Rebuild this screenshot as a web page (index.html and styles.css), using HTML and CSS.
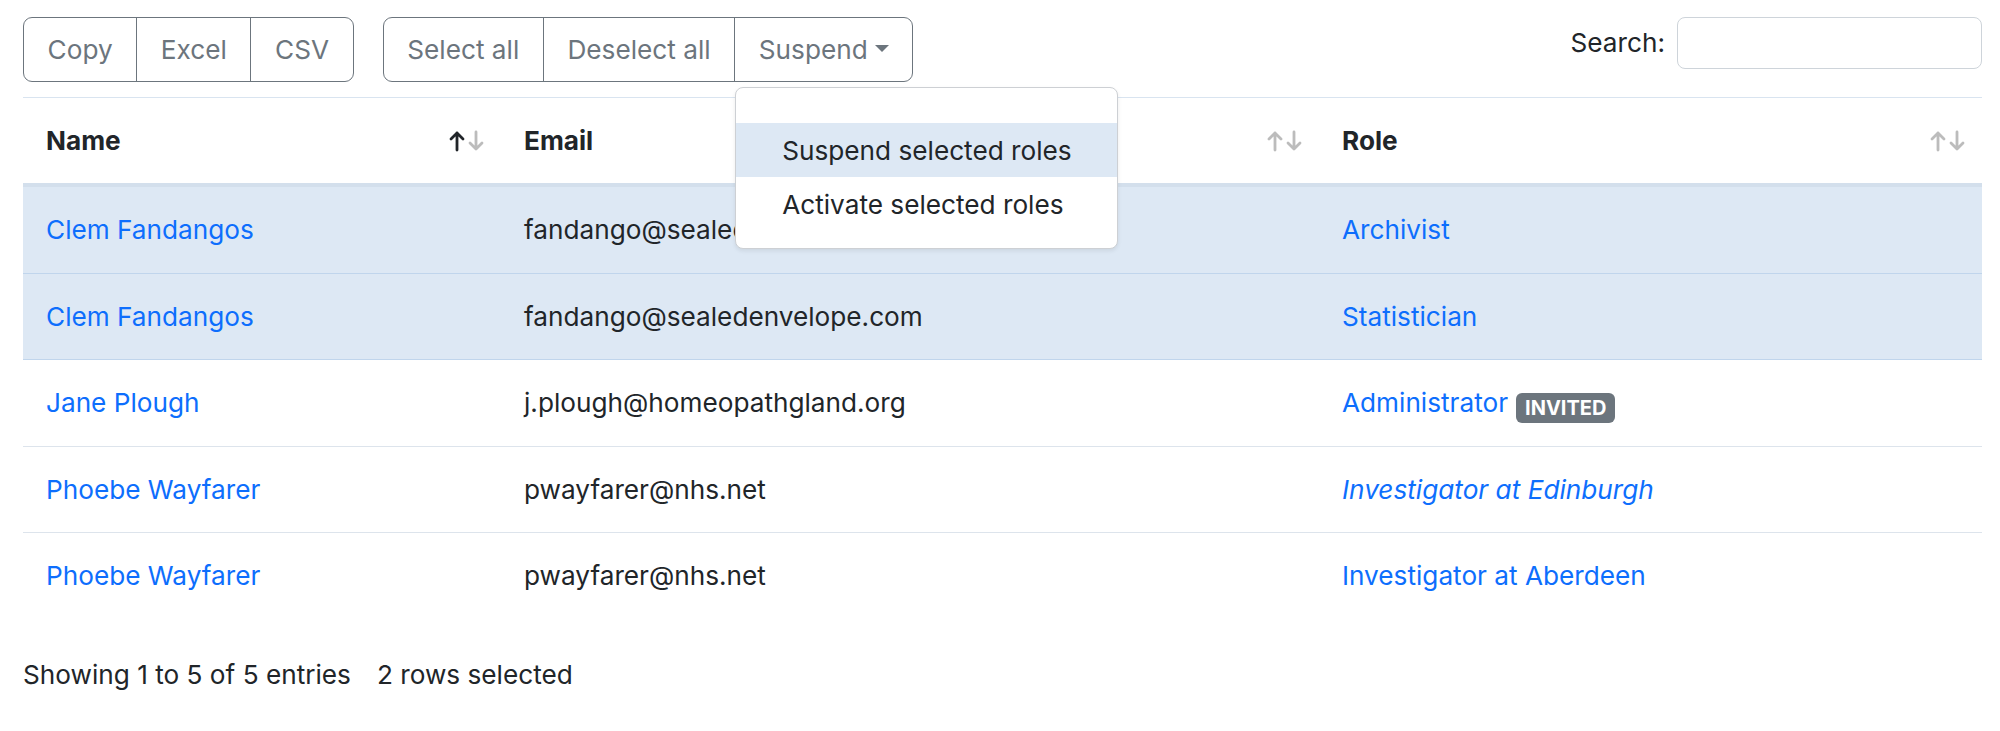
FILE: index.html
```html
<!DOCTYPE html>
<html lang="en">
<head>
<meta charset="utf-8">
<title>Roles</title>
<link rel="stylesheet" href="styles.css">
</head>
<body>
<div class="wrapper">
  <div class="toolbar">
    <div class="btn-group">
      <button class="btn">Copy</button>
      <button class="btn">Excel</button>
      <button class="btn">CSV</button>
    </div>
    <div class="btn-group second">
      <button class="btn">Select all</button>
      <button class="btn">Deselect all</button>
      <div class="dropdown">
        <button class="btn btn-last">Suspend<span class="caret"></span></button>
        <ul class="dropdown-menu">
          <li class="dropdown-item active">Suspend selected roles</li>
          <li class="dropdown-item">Activate selected roles</li>
        </ul>
      </div>
    </div>
    <label class="search">Search:<input type="search" class="search-input"></label>
  </div>

  <table class="table">
    <colgroup>
      <col class="col-name">
      <col class="col-email">
      <col class="col-role">
    </colgroup>
    <thead>
      <tr>
        <th><div class="th-inner"><span>Name</span>
          <svg class="sort" width="36" height="22" viewBox="0 0 36 22"><g fill="none" stroke-width="2.8" stroke-linecap="round" stroke-linejoin="round"><path class="on" d="M8 20V3M2 9l6-6 6 6"/><path class="off" d="M27 2v17M21 13l6 6 6-6"/></g></svg></div></th>
        <th><div class="th-inner"><span>Email</span>
          <svg class="sort" width="36" height="22" viewBox="0 0 36 22"><g fill="none" stroke-width="2.8" stroke-linecap="round" stroke-linejoin="round"><path class="off" d="M8 20V3M2 9l6-6 6 6"/><path class="off" d="M27 2v17M21 13l6 6 6-6"/></g></svg></div></th>
        <th><div class="th-inner"><span>Role</span>
          <svg class="sort" width="36" height="22" viewBox="0 0 36 22"><g fill="none" stroke-width="2.8" stroke-linecap="round" stroke-linejoin="round"><path class="off" d="M8 20V3M2 9l6-6 6 6"/><path class="off" d="M27 2v17M21 13l6 6 6-6"/></g></svg></div></th>
      </tr>
    </thead>
    <tbody>
      <tr class="selected">
        <td><a href="#">Clem Fandangos</a></td>
        <td>fandango@sealedenvelope.com</td>
        <td><a href="#">Archivist</a></td>
      </tr>
      <tr class="selected">
        <td><a href="#">Clem Fandangos</a></td>
        <td>fandango@sealedenvelope.com</td>
        <td><a href="#">Statistician</a></td>
      </tr>
      <tr>
        <td><a href="#">Jane Plough</a></td>
        <td>j.plough@homeopathgland.org</td>
        <td><a href="#">Administrator</a><span class="badge">INVITED</span></td>
      </tr>
      <tr>
        <td><a href="#">Phoebe Wayfarer</a></td>
        <td>pwayfarer@nhs.net</td>
        <td><a href="#" class="italic">Investigator at Edinburgh</a></td>
      </tr>
      <tr class="last">
        <td><a href="#">Phoebe Wayfarer</a></td>
        <td>pwayfarer@nhs.net</td>
        <td><a href="#">Investigator at Aberdeen</a></td>
      </tr>
    </tbody>
  </table>

  <div class="info">Showing 1 to 5 of 5 entries<span class="select-info">2 rows selected</span></div>
</div>
</body>
</html>
```

FILE: styles.css
```css
* { box-sizing: border-box; }

html, body {
  margin: 0;
  padding: 0;
  background: #ffffff;
}

body {
  font-family: "Inter", "Noto Sans", "Liberation Sans", sans-serif;
  font-size: 26.2px;
  line-height: 1.5;
  color: #212529;
}

.wrapper {
  padding: 17px 18px 0 23px;
}

.toolbar {
  display: flex;
  align-items: flex-start;
  height: 65px;
}

.btn-group {
  display: flex;
  border: 1.5px solid #6c757d;
  border-radius: 9px;
  height: 65px;
}

.btn-group.second {
  margin-left: 29px;
}

.btn {
  font-family: inherit;
  font-size: 26.2px;
  line-height: 39px;
  color: #6c757d;
  background: transparent;
  border: none;
  border-left: 1.5px solid #6c757d;
  padding: 11px 23.6px;
  margin: 0;
  height: 100%;
  display: flex;
  align-items: center;
}

.btn-group > .btn:first-child {
  border-left: none;
}

.dropdown {
  position: relative;
  display: flex;
}

.caret {
  display: inline-block;
  margin-left: 7px;
  width: 0;
  height: 0;
  border-top: 7.7px solid #6c757d;
  border-left: 7.7px solid transparent;
  border-right: 7.7px solid transparent;
  margin-top: -2px;
}

.dropdown-menu {
  position: absolute;
  top: 69px;
  left: 1px;
  width: 383px;
  margin: 0;
  padding: 35px 0 16px;
  list-style: none;
  background: #fff;
  border: 1.5px solid #cdd0d4;
  border-radius: 8px;
  box-shadow: 0 2px 4px rgba(0, 0, 0, 0.08);
  z-index: 10;
}

.dropdown-item {
  padding: 7.5px 20px 7.5px 46px;
  color: #212529;
  white-space: nowrap;
}

.dropdown-item.active {
  background: #dde8f4;
}

.search {
  margin-left: auto;
  display: flex;
  align-items: center;
  height: 52px;
}

.search-input {
  margin-left: 12px;
  width: 305px;
  height: 52px;
  border: 1.5px solid #ced4da;
  border-radius: 8px;
  font-family: inherit;
  font-size: 22px;
  background: #fff;
}

.table {
  width: 1959px;
  margin-top: 15px;
  border-collapse: collapse;
  table-layout: fixed;
  border-top: 1.6px solid #d9e4f0;
}

.col-name { width: 478px; }
.col-email { width: 818px; }
.col-role { width: 663px; }

th, td {
  text-align: left;
  padding: 23px 16px 23px 23px;
  vertical-align: middle;
}

th {
  font-weight: 700;
  border-bottom: 4px solid #d3dfec;
}

.th-inner {
  display: flex;
  justify-content: space-between;
  align-items: center;
}

.sort { display: block; }
.sort .on { stroke: #212529; }
.sort .off { stroke: #bcbcbc; }

td {
  border-bottom: 1.6px solid #dde4ec;
}

tr.selected td {
  background: #dde8f4;
  border-bottom-color: #c0d5ec;
}

tr.last td {
  border-bottom: none;
}

a {
  color: #0d6efd;
  text-decoration: none;
}

a.italic {
  font-style: italic;
}

.badge {
  display: inline-block;
  margin-left: 8px;
  padding: 5px 9px;
  font-size: 20px;
  line-height: 1;
  font-weight: 700;
  color: #fff;
  background: #6c757d;
  border-radius: 6px;
  vertical-align: -3px;
}

.info {
  margin-top: 37px;
}

.select-info {
  margin-left: 26px;
}
```
